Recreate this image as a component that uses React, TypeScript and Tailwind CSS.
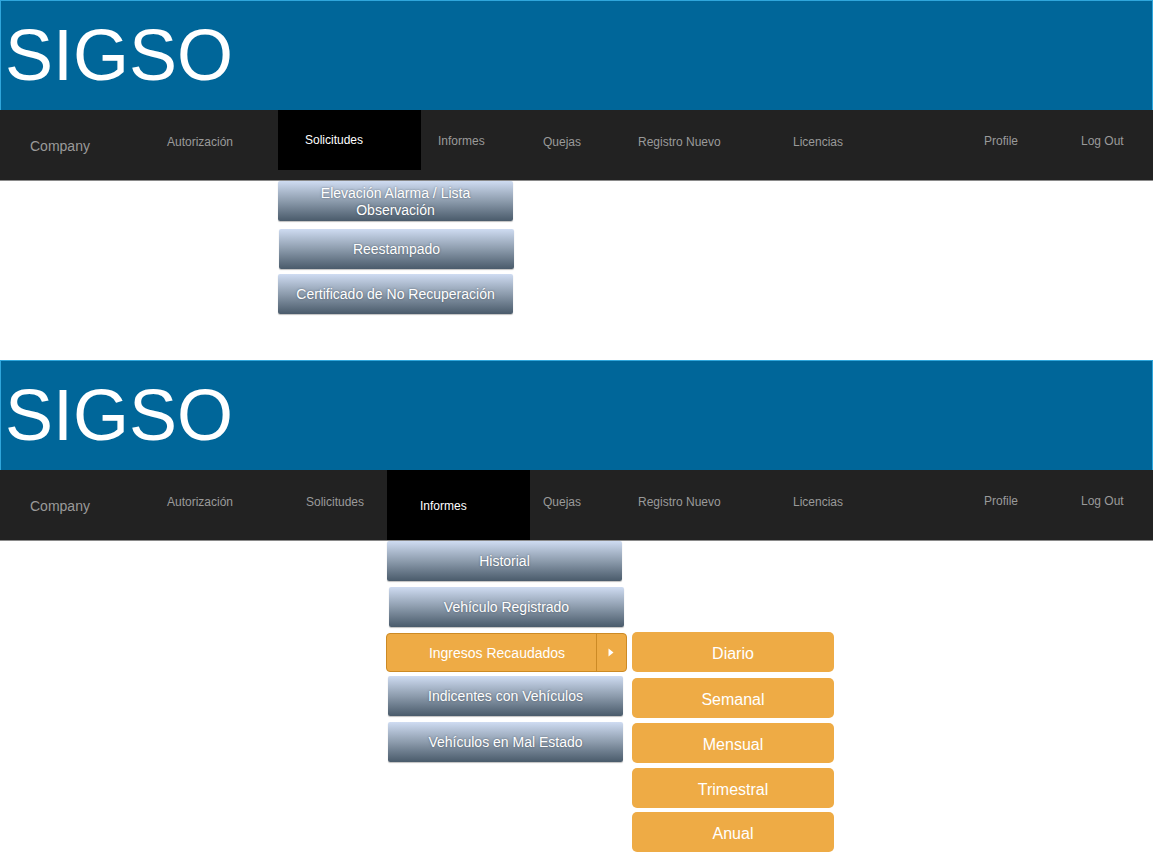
import React from 'react';

type NavItem = { label: string; box: string; text: string };

const baseItems = (active: 'Solicitudes' | 'Informes'): NavItem[] => [
  { label: 'Company', box: 'w-[152px] pl-[30px] pt-[24px]', text: 'text-[14px] text-[#9a9a9a]' },
  { label: 'Autorización', box: 'w-[126px] pl-[15px] pt-[19px]', text: 'text-[12px] text-[#9a9a9a]' },
  active === 'Solicitudes'
    ? { label: 'Solicitudes', box: 'w-[143px] h-[60px] pl-[27px] pt-[17px] bg-black', text: 'text-[12px] text-white' }
    : { label: 'Solicitudes', box: 'w-[109px] pl-[28px] pt-[19px]', text: 'text-[12px] text-[#9a9a9a]' },
  active === 'Informes'
    ? { label: 'Informes', box: 'w-[143px] h-[70px] pl-[33px] pt-[23px] bg-black', text: 'text-[12px] text-white' }
    : { label: 'Informes', box: 'w-[107px] pl-[17px] pt-[18px]', text: 'text-[12px] text-[#9a9a9a]' },
  { label: 'Quejas', box: active === 'Informes' ? 'w-[93px] pl-[13px] pt-[19px]' : 'w-[95px] pl-[15px] pt-[19px]', text: 'text-[12px] text-[#9a9a9a]' },
  { label: 'Registro Nuevo', box: 'w-[155px] pl-[15px] pt-[19px]', text: 'text-[12px] text-[#9a9a9a]' },
  { label: 'Licencias', box: 'w-[206px] pl-[15px] pt-[19px]', text: 'text-[12px] text-[#9a9a9a]' },
  { label: 'Profile', box: 'w-[97px] pl-[0px] pt-[18px]', text: 'text-[12px] text-[#9a9a9a]' },
  { label: 'Log Out', box: 'w-[60px] pl-[0px] pt-[18px]', text: 'text-[12px] text-[#9a9a9a]' },
];

function Header({ active }: { active: 'Solicitudes' | 'Informes' }) {
  const items = baseItems(active);
  return (
    <div className="w-[1153px]">
      <div className="h-[110px] bg-[#006699] border-t border-l border-r border-[#2fa6dc] pl-[4px] pt-[16px]">
        <h1 className="text-[72px] leading-[76px] text-white font-['Liberation_Sans',Arial,sans-serif]">SIGSO</h1>
      </div>
      <nav className="h-[71px] bg-[#222222] border-b border-[#8a8a8a] flex items-start font-['Liberation_Sans',Arial,sans-serif]">
        {items.map((it) => (
          <div key={it.label} className={`shrink-0 ${it.box}`}>
            <span className={`leading-[14px] ${it.text}`}>{it.label}</span>
          </div>
        ))}
      </nav>
    </div>
  );
}

function BlueButton({ children, className = '' }: { children: React.ReactNode; className?: string }) {
  return (
    <div
      className={`w-[235px] h-[40px] pt-[1px] rounded-[2px] bg-gradient-to-b from-[#cfdcf2] via-[#8d9cad] to-[#4a5b6b] flex items-center justify-center text-center text-white text-[14px] leading-[17px] [text-shadow:0_0_2px_rgba(40,50,60,0.6)] shadow-[0_1px_1px_rgba(0,0,0,0.25)] ${className}`}
    >
      {children}
    </div>
  );
}

function OrangeItem({ children, className = '' }: { children: React.ReactNode; className?: string }) {
  return (
    <div className={`w-[202px] h-[40px] pt-[3px] rounded-[5px] bg-[#eeab45] flex items-center justify-center text-white text-[16px] ${className}`}>
      {children}
    </div>
  );
}

export default function App() {
  return (
    <div className="w-[1153px] h-[853px] bg-white overflow-hidden font-['Liberation_Sans',Arial,sans-serif]">
      {/* first screen */}
      <div className="h-[360px] flex flex-col">
        <Header active="Solicitudes" />
        <div className="pl-[278px] flex flex-col">
          <BlueButton>
            <span>Elevación Alarma / Lista<br />Observación</span>
          </BlueButton>
          <BlueButton className="mt-[8px] ml-[1px]">Reestampado</BlueButton>
          <BlueButton className="mt-[5px]">Certificado de No Recuperación</BlueButton>
        </div>
      </div>

      {/* second screen */}
      <div className="flex flex-col">
        <Header active="Informes" />
        <div className="flex pl-[386px]">
          <div className="flex flex-col w-[242px]">
            <BlueButton className="ml-[1px]">Historial</BlueButton>
            <BlueButton className="mt-[6px] ml-[3px] h-[39px]">Vehículo Registrado</BlueButton>
            <div className="mt-[6px] w-[241px] h-[39px] rounded-[4px] bg-[#eeab45] border border-[#cc8a25] flex text-white text-[14px]">
              <div className="w-[210px] pt-[2px] pl-[11px] flex items-center justify-center border-r border-[#cc8a25]">Ingresos Recaudados</div>
              <div className="flex-1 flex items-center justify-center pr-[2px]">
                <svg width="6" height="9" viewBox="0 0 6 9"><path d="M0.5 0.5 L5.5 4.5 L0.5 8.5 Z" fill="#ffffff" /></svg>
              </div>
            </div>
            <BlueButton className="mt-[4px] ml-[2px] h-[39px]">Indicentes con Vehículos</BlueButton>
            <BlueButton className="mt-[6px] ml-[2px] h-[39px]">Vehículos en Mal Estado</BlueButton>
          </div>
          <div className="flex flex-col ml-[4px] mt-[91px]">
            <OrangeItem>Diario</OrangeItem>
            <OrangeItem className="mt-[6px]">Semanal</OrangeItem>
            <OrangeItem className="mt-[5px]">Mensual</OrangeItem>
            <OrangeItem className="mt-[5px]">Trimestral</OrangeItem>
            <OrangeItem className="mt-[4px]">Anual</OrangeItem>
          </div>
        </div>
      </div>
    </div>
  );
}
